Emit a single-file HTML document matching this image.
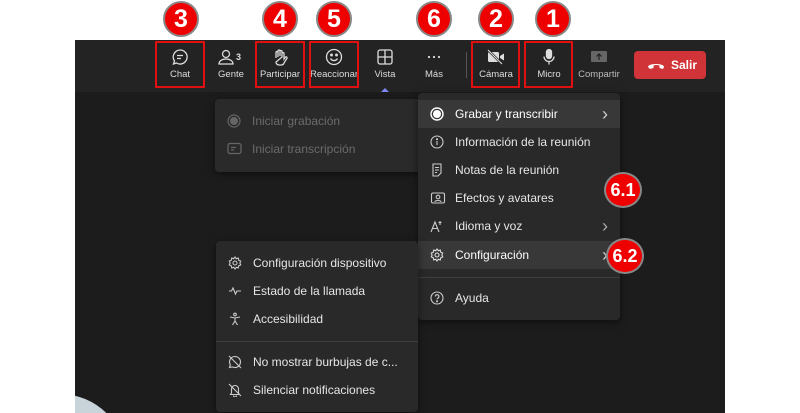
<!DOCTYPE html>
<html><head><meta charset="utf-8"><style>
*{margin:0;padding:0;box-sizing:border-box}
html,body{overflow:hidden}
body{width:800px;height:413px;background:#fff;position:relative;overflow:hidden;font-family:"Liberation Sans",sans-serif;}
.abs{position:absolute}
#dark{left:75px;top:40px;width:650px;height:373px;background:#1c1c1c;overflow:hidden}
#tb{left:75px;top:40px;width:650px;height:52px;background:#232323}
.btn{position:absolute;top:44px;width:50px;text-align:center;color:#ddd;font-size:9.5px}
.btn svg{display:block;margin:4px auto 3px;}
.rb{position:absolute;border:2px solid #e01010;top:41px;height:47px}
.badge{position:absolute;width:36px;height:36px;border-radius:50%;background:#e00;border:2px solid #888;color:#fff;font-weight:bold;font-size:25px;text-align:center;line-height:32px}
.menu{position:absolute;background:#292929;border-radius:4px;box-shadow:0 2px 8px rgba(0,0,0,.5)}
.it{position:absolute;left:0;right:0;height:28px;font-size:12px;color:#e6e6e6;padding-left:37px;line-height:28px}
.it svg{position:absolute;left:12px;top:7px}
.chev{position:absolute;right:12px;top:0;font-size:18px;color:#ccc}
.sep{position:absolute;left:0;right:0;height:1px;background:#3d3d3d}
</style></head><body>
<div class="abs" id="dark"><div class="abs" style="left:-81px;top:354px;width:132px;height:132px;border-radius:50%;background:#c9d3da"></div></div>
<div class="abs" id="tb"></div>

<div class="btn" style="left:155px"><svg width="18" height="18" viewBox="0 0 18 18" fill="none" stroke="#ddd" stroke-width="1.3"><path d="M9 2a7 7 0 1 1-3.5 13L2.5 16l1-3A7 7 0 0 1 9 2z"/><path d="M6 7.5h6M6 10.5h4"/></svg>Chat</div>
<div class="btn" style="left:206px"><svg width="28" height="18" viewBox="0 0 28 18" fill="none" stroke="#ddd" stroke-width="1.3"><circle cx="9" cy="6" r="3.5"/><path d="M2 16c0-3 3-5 7-5s7 2 7 5z"/><text x="19" y="12" fill="#ddd" stroke="none" font-size="9" font-weight="bold" font-family="Liberation Sans">3</text></svg>Gente</div>
<div class="btn" style="left:255px"><svg width="18" height="18" viewBox="0 0 18 18" fill="none" stroke="#ddd" stroke-width="1.3"><path d="M5 10V4.5a1 1 0 0 1 2 0V9M7 8V3a1 1 0 0 1 2 0v5M9 8V3.5a1 1 0 0 1 2 0V9M11 9V5.5a1 1 0 0 1 2 0V11l1.5-2a1 1 0 0 1 1.5 1.2L13 15a3 3 0 0 1-3 2H8a3 3 0 0 1-3-3z"/></svg>Participar</div>
<div class="btn" style="left:309px"><svg width="18" height="18" viewBox="0 0 18 18" fill="none" stroke="#ddd" stroke-width="1.3"><circle cx="9" cy="9" r="7.5"/><circle cx="6.5" cy="7" r=".8" fill="#ddd"/><circle cx="11.5" cy="7" r=".8" fill="#ddd"/><path d="M5.5 10.5a4 4 0 0 0 7 0"/></svg>Reaccionar</div>
<div class="btn" style="left:360px"><svg width="18" height="18" viewBox="0 0 18 18" fill="none" stroke="#ddd" stroke-width="1.3"><rect x="2" y="2" width="14" height="14" rx="2"/><path d="M9 2v14M2 9h14"/></svg>Vista</div>
<div class="abs" style="left:381px;top:88px;width:0;height:0;border-left:4px solid transparent;border-right:4px solid transparent;border-bottom:4px solid #7f85f5"></div>
<div class="btn" style="left:409px"><svg width="18" height="18" viewBox="0 0 18 18" fill="#ddd"><circle cx="4" cy="9" r="1.1"/><circle cx="9" cy="9" r="1.1"/><circle cx="14" cy="9" r="1.1"/></svg>Más</div>
<div class="abs" style="left:466px;top:52px;width:1px;height:26px;background:#555"></div>
<div class="btn" style="left:471px"><svg width="20" height="18" viewBox="0 0 20 18" fill="#ddd"><rect x="2" y="4" width="11" height="10" rx="1.5"/><path d="M14 8l4-2.5v7L14 10z"/><path d="M2 2l14 14" stroke="#232323" stroke-width="2.5"/><path d="M2 2l14 14" stroke="#ddd" stroke-width="1.1"/></svg>Cámara</div>
<div class="btn" style="left:524px"><svg width="18" height="18" viewBox="0 0 18 18" fill="none" stroke="#ddd" stroke-width="1.3"><rect x="6.5" y="1.5" width="5" height="9" rx="2.5" fill="#ddd"/><path d="M4 8.5a5 5 0 0 0 10 0M9 13.5v3"/></svg>Micro</div>
<div class="btn" style="left:574px"><svg width="18" height="18" viewBox="0 0 18 18"><rect x="1" y="3" width="16" height="11" rx="1" fill="#666"/><path d="M9 12V6M6.5 8.5L9 6l2.5 2.5" stroke="#222" stroke-width="1.2" fill="none"/></svg><span style="color:#bbb">Compartir</span></div>
<div class="abs" style="left:634px;top:51px;width:72px;height:28px;background:#d13438;border-radius:4px;color:#fff;font-weight:bold;font-size:12px;line-height:28px;padding-left:37px"><svg style="position:absolute;left:13px;top:9px" width="18" height="10" viewBox="0 0 18 10"><path d="M1 7c0-4 16-4 16 0l-1 2-3.5-1V5.5c-2-.7-4-.7-6 0V8L3 9z" fill="#fff"/></svg>Salir</div>

<div class="rb" style="left:155px;width:50px"></div>
<div class="rb" style="left:255px;width:50px"></div>
<div class="rb" style="left:309px;width:50px"></div>
<div class="rb" style="left:471px;width:49px"></div>
<div class="rb" style="left:524px;width:49px"></div>

<div class="menu" style="left:215px;top:99px;width:208px;height:73px;background:#2a2a2a">
<div class="it" style="top:8px;color:#6b6b6b"><svg width="14" height="14" viewBox="0 0 14 14"><circle cx="7" cy="7" r="6" fill="none" stroke="#666" stroke-width="1.2"/><circle cx="7" cy="7" r="4" fill="#666"/></svg>Iniciar grabación</div>
<div class="it" style="top:36px;color:#6b6b6b"><svg width="15" height="13" viewBox="0 0 15 13" fill="none" stroke="#666" stroke-width="1.2"><rect x="1" y="1.5" width="13" height="10" rx="2"/><path d="M4 5.5h5M4 8h3"/></svg>Iniciar transcripción</div>
</div>

<div class="menu" style="left:418px;top:93px;width:202px;height:227px">
<div class="it" style="top:7px;background:#383838;height:28px;color:#fff"><svg width="14" height="14" viewBox="0 0 14 14"><circle cx="7" cy="7" r="6" fill="none" stroke="#fff" stroke-width="1.4"/><circle cx="7" cy="7" r="4" fill="#fff"/></svg>Grabar y transcribir<span class="chev">&#x203A;</span></div>
<div class="it" style="top:35px"><svg width="14" height="14" viewBox="0 0 14 14" fill="none" stroke="#ccc" stroke-width="1.1"><circle cx="7" cy="7" r="6"/><path d="M7 6v4"/><circle cx="7" cy="4.2" r=".5" fill="#ccc"/></svg>Información de la reunión</div>
<div class="it" style="top:63px"><svg width="14" height="14" viewBox="0 0 14 14" fill="none" stroke="#ccc" stroke-width="1.1"><path d="M3 1h8v9l-3 3H3z"/><path d="M5 4.5h4M5 7h4M5 9.5h2"/></svg>Notas de la reunión</div>
<div class="it" style="top:91px"><svg width="16" height="14" viewBox="0 0 16 14" fill="none" stroke="#ccc" stroke-width="1.1"><rect x="1.5" y="2" width="13" height="10" rx="1.5"/><circle cx="8" cy="6" r="1.8"/><path d="M5 11c0-2 6-2 6 0"/></svg>Efectos y avatares</div>
<div class="it" style="top:119px"><svg width="14" height="14" viewBox="0 0 14 14" fill="none" stroke="#ccc" stroke-width="1.1"><path d="M1 13L5 3l4 10M2.5 9.5h5M10 2v4M8.5 3.5h3"/></svg>Idioma y voz<span class="chev" style="color:#aaa">&#x203A;</span></div>
<div class="it" style="top:148px;background:#383838;height:28px;color:#fff"><svg width="14" height="14" viewBox="0 0 14 14" fill="none" stroke="#ddd" stroke-width="1.1"><circle cx="7" cy="7" r="2"/><path d="M7 1l1.3 1.7 2-.6.4 2.1 2 .8-.8 2 .8 2-2 .8-.4 2.1-2-.6L7 13l-1.3-1.7-2 .6-.4-2.1-2-.8.8-2-.8-2 2-.8.4-2.1 2 .6z"/></svg>Configuración<span class="chev">&#x203A;</span></div>
<div class="sep" style="top:184px"></div>
<div class="it" style="top:191px"><svg width="14" height="14" viewBox="0 0 14 14" fill="none" stroke="#ccc" stroke-width="1.1"><circle cx="7" cy="7" r="6"/><path d="M5.3 5.5a1.8 1.8 0 1 1 2.4 1.7c-.5.3-.7.6-.7 1.2"/><circle cx="7" cy="10.3" r=".5" fill="#ccc"/></svg>Ayuda</div>
</div>

<div class="menu" style="left:216px;top:241px;width:202px;height:171px">
<div class="it" style="top:8px"><svg width="14" height="14" viewBox="0 0 14 14" fill="none" stroke="#ccc" stroke-width="1.1"><circle cx="7" cy="7" r="2"/><path d="M7 1l1.3 1.7 2-.6.4 2.1 2 .8-.8 2 .8 2-2 .8-.4 2.1-2-.6L7 13l-1.3-1.7-2 .6-.4-2.1-2-.8.8-2-.8-2 2-.8.4-2.1 2 .6z"/></svg>Configuración dispositivo</div>
<div class="it" style="top:36px"><svg width="14" height="14" viewBox="0 0 14 14" fill="none" stroke="#ccc" stroke-width="1.1"><path d="M1 7h2.5l1.5-3 2.5 6 1.5-3H13"/></svg>Estado de la llamada</div>
<div class="it" style="top:64px"><svg width="14" height="14" viewBox="0 0 14 14" fill="none" stroke="#ccc" stroke-width="1.1"><circle cx="7" cy="2.5" r="1.3"/><path d="M2 5l5 1 5-1M7 6v3l-2.5 4M7 9l2.5 4"/></svg>Accesibilidad</div>
<div class="sep" style="top:100px"></div>
<div class="it" style="top:107px"><svg width="14" height="14" viewBox="0 0 14 14" fill="none" stroke="#ccc" stroke-width="1.1"><path d="M7 1.5a5.5 5.5 0 1 1-2.7 10.3L1.5 12.5l.8-2.7A5.5 5.5 0 0 1 7 1.5z"/><path d="M1 1l12 12"/></svg>No mostrar burbujas de c...</div>
<div class="it" style="top:135px"><svg width="14" height="14" viewBox="0 0 14 14" fill="none" stroke="#ccc" stroke-width="1.1"><path d="M3.5 10V6a3.5 3.5 0 0 1 7 0v4l1 1.5h-9zM5.5 12.5a1.5 1.5 0 0 0 3 0M1 1l12 12"/></svg>Silenciar notificaciones</div>
</div>

<div class="badge" style="left:163px;top:1px">3</div>
<div class="badge" style="left:262px;top:1px">4</div>
<div class="badge" style="left:316px;top:1px">5</div>
<div class="badge" style="left:416px;top:1px">6</div>
<div class="badge" style="left:478px;top:1px">2</div>
<div class="badge" style="left:535px;top:1px">1</div>
<div class="badge" style="left:604px;top:172px;width:38px;height:36px;font-size:18px;line-height:32px">6.1</div>
<div class="badge" style="left:606px;top:238px;width:38px;height:36px;font-size:18px;line-height:32px">6.2</div>
</body></html>
